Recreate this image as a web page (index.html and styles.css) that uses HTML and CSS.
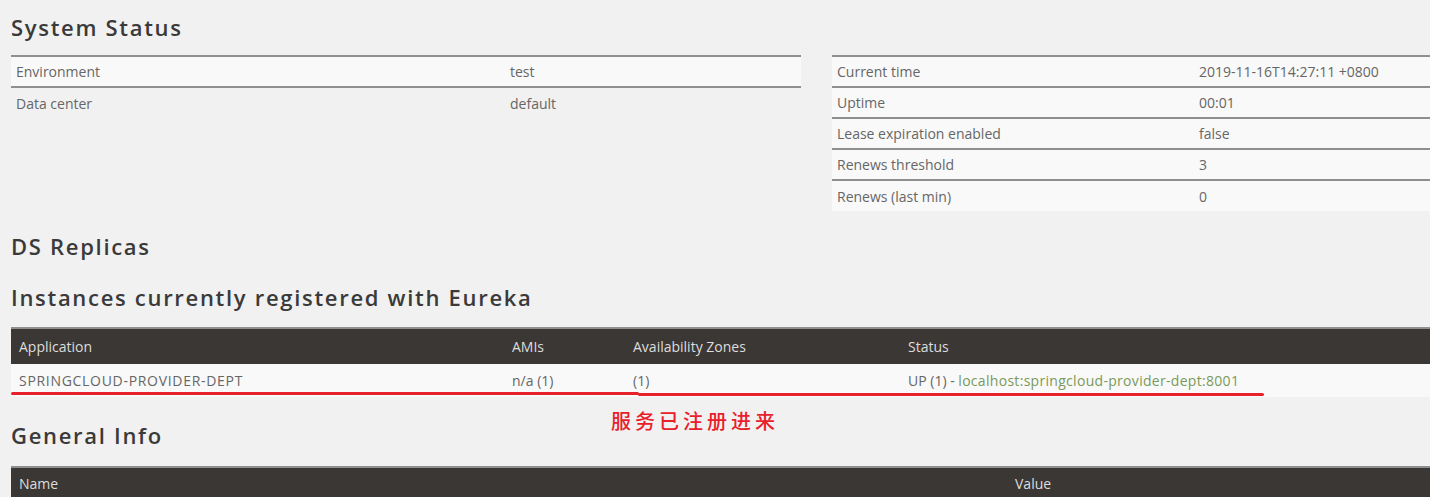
FILE: index.html
```html
<!DOCTYPE html>
<html lang="en">
<head>
    <meta charset="UTF-8">
    <title>Eureka</title>
    <link rel="stylesheet" href="styles.css">
</head>
<body>
    <div class="container">
        <h2>System Status</h2>
        <div class="status-grid">
            <table class="info-table">
                <tr class="odd"><td>Environment</td><td>test</td></tr>
                <tr><td>Data center</td><td>default</td></tr>
            </table>
            <table class="info-table stats">
                <tr><td>Current time</td><td>2019-11-16T14:27:11 +0800</td></tr>
                <tr><td>Uptime</td><td>00:01</td></tr>
                <tr><td>Lease expiration enabled</td><td>false</td></tr>
                <tr><td>Renews threshold</td><td>3</td></tr>
                <tr><td>Renews (last min)</td><td>0</td></tr>
            </table>
        </div>

        <h2 class="replicas">DS Replicas</h2>
        <h2 class="instances-title">Instances currently registered with Eureka</h2>
        <div class="instances">
            <table class="dark-table">
                <thead>
                    <tr>
                        <th class="col-app">Application</th>
                        <th class="col-ami">AMIs</th>
                        <th class="col-zone">Availability Zones</th>
                        <th>Status</th>
                    </tr>
                </thead>
                <tbody>
                    <tr>
                        <td class="app-name">SPRINGCLOUD-PROVIDER-DEPT</td>
                        <td>n/a (1)</td>
                        <td>(1)</td>
                        <td>UP (1) - <a href="#">localhost:springcloud-provider-dept:8001</a></td>
                    </tr>
                </tbody>
            </table>
            <!-- annotation -->
            <div class="mark mark-a"></div>
            <div class="mark mark-b"></div>
            <div class="note">服务已注册进来</div>
        </div>

        <h2 class="general-title">General Info</h2>
        <table class="dark-table general">
            <thead>
                <tr><th class="col-name">Name</th><th>Value</th></tr>
            </thead>
        </table>
    </div>
</body>
</html>
```

FILE: styles.css
```css
* {
    margin: 0;
    padding: 0;
    box-sizing: border-box;
}
html, body {
    overflow: hidden;
}
body {
    background-color: #f1f1f1;
    font-family: 'Open Sans', 'Liberation Sans', sans-serif;
    font-size: 14px;
    color: #666;
}
.container {
    width: 1640px;
    padding-left: 11px;
}
h2 {
    font-family: 'Open Sans', 'Liberation Sans', sans-serif;
    font-weight: 600;
    font-size: 22px;
    letter-spacing: 1.7px;
    line-height: 30px;
    color: #3a3a3a;
    margin-top: 12px;
    margin-bottom: 13px;
}
.status-grid {
    display: grid;
    grid-template-columns: 790px 790px;
    gap: 31px;
    align-items: start;
}
table {
    border-collapse: collapse;
    width: 100%;
}
.info-table td {
    height: 31px;
    padding: 0 5px;
    border-top: 2px solid #8f8f8f;
    vertical-align: middle;
}
.info-table td:first-child {
    width: 494px;
}
.stats td:first-child {
    width: 362px;
}
.info-table .odd td,
.stats td {
    background-color: #f9f9f9;
}
.replicas {
    margin-top: 20px;
    margin-bottom: 0;
}
.instances-title {
    margin-top: 21px;
    margin-bottom: 15px;
}
.instances {
    position: relative;
    width: 1419px;
}
.dark-table th {
    background-color: #3b3734;
    color: #ddd;
    font-weight: normal;
    text-align: left;
    height: 36px;
    padding: 0 8px;
    border-top: 2px solid #8f8f8f;
}
.dark-table td {
    background-color: #f9f9f9;
    height: 33px;
    padding: 0 8px;
}
.app-name {
    letter-spacing: 0.7px;
}
.col-app { width: 493px; }
.col-ami { width: 121px; }
.col-zone { width: 275px; }
.col-name { width: 996px; }
.dark-table a {
    color: #7a9a5a;
    letter-spacing: 0.3px;
    text-decoration: none;
}
.mark {
    position: absolute;
    height: 3px;
    background-color: #e8202a;
    border-radius: 2px;
}
.mark-a {
    left: 0;
    top: 65px;
    width: 628px;
}
.mark-b {
    left: 627px;
    top: 66px;
    width: 626px;
}
.note {
    position: absolute;
    left: 600px;
    top: 79px;
    font-family: 'Noto Sans CJK SC', sans-serif;
    font-size: 20px;
    font-weight: 500;
    letter-spacing: 4px;
    color: #e8202a;
}
.general-title {
    margin-top: 23px;
    margin-bottom: 16px;
}
.general {
    width: 1419px;
}
.general th {
    height: 31px;
}
```
